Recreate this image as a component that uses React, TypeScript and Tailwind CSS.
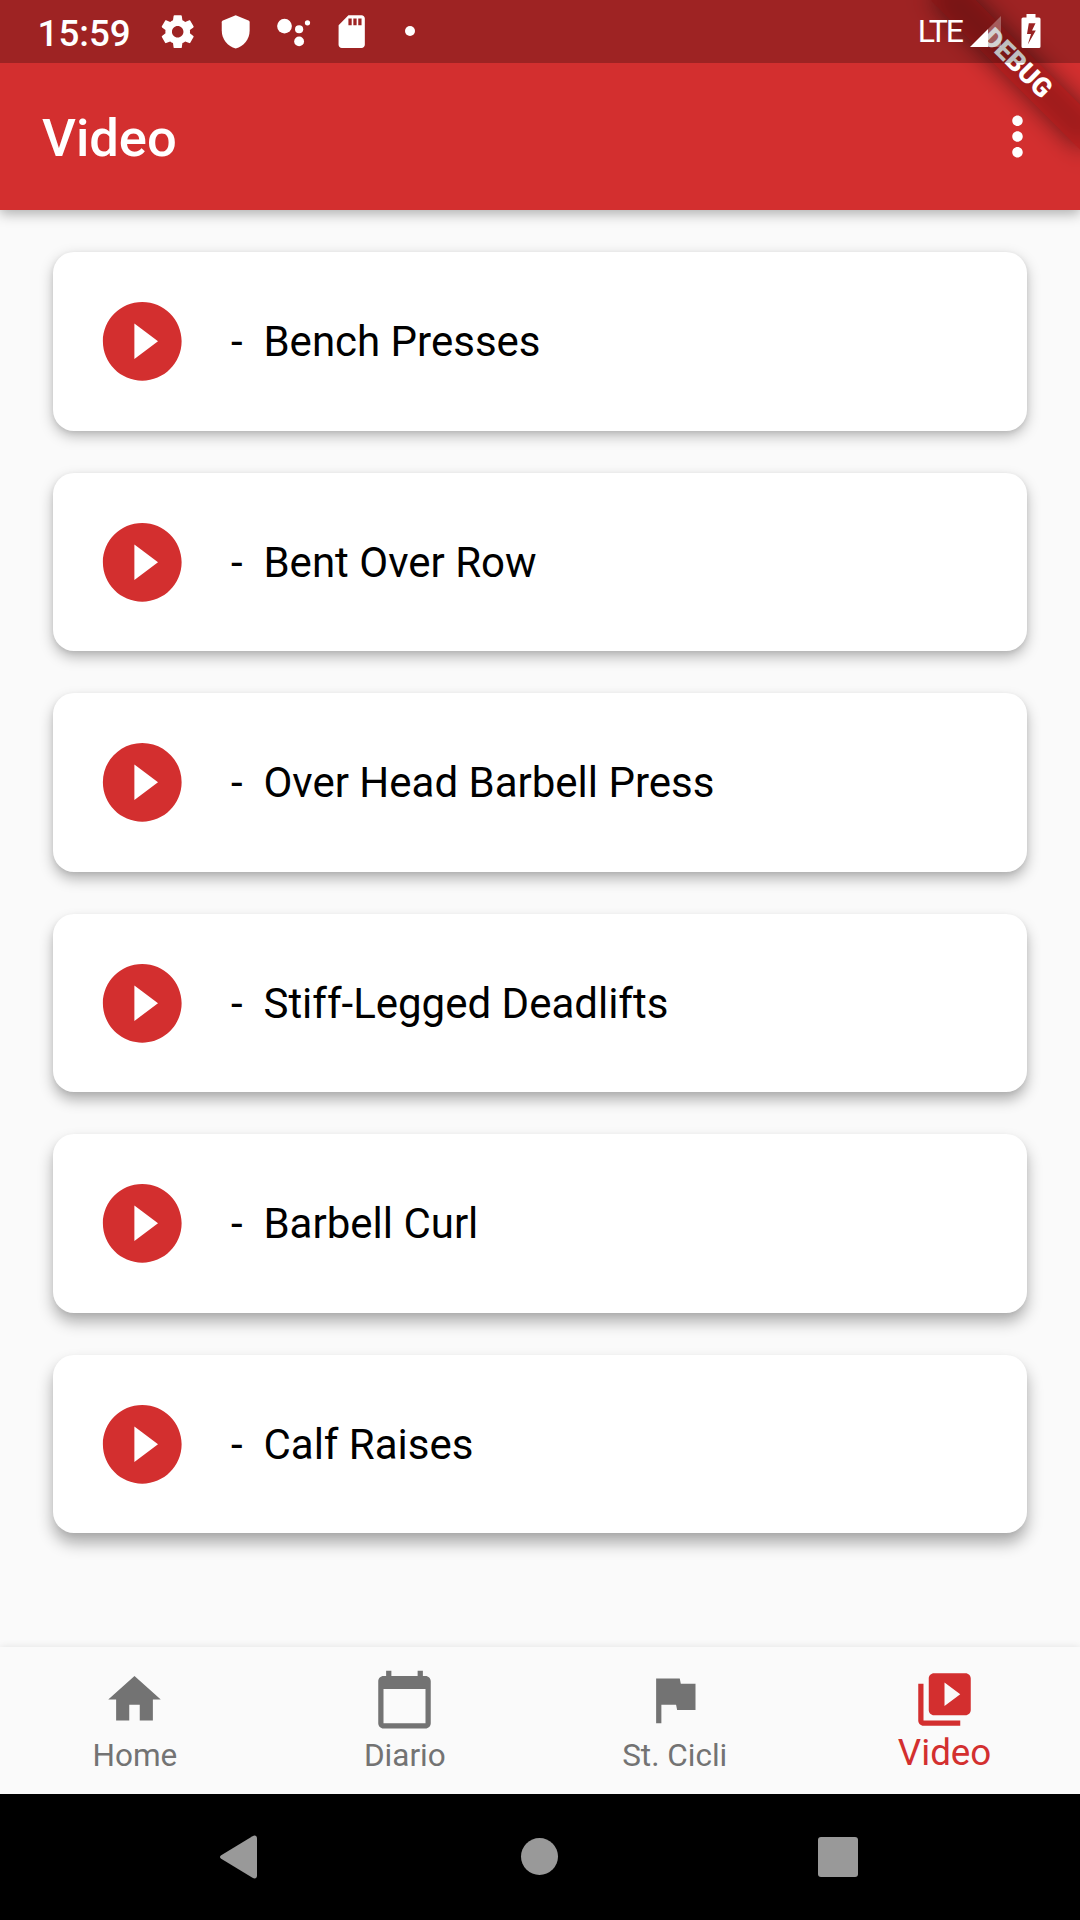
import React from 'react';

interface IconProps {
  d: string;
  className?: string;
}

interface Exercise {
  name: string;
  shadow: string;
}

interface Tab {
  label: string;
  icon: string;
  active?: boolean;
}

const icons = {
  settings:
    'M19.43 12.98c.04-.32.07-.64.07-.98s-.03-.66-.07-.98l2.11-1.65c.19-.15.24-.42.12-.64l-2-3.46c-.12-.22-.39-.3-.61-.22l-2.49 1c-.52-.4-1.08-.73-1.69-.98l-.38-2.65C14.46 2.18 14.25 2 14 2h-4c-.25 0-.46.18-.49.42l-.38 2.65c-.61.25-1.17.59-1.69.98l-2.49-1c-.23-.09-.49 0-.61.22l-2 3.46c-.13.22-.07.49.12.64l2.11 1.65c-.04.32-.07.65-.07.98s.03.66.07.98l-2.11 1.65c-.19.15-.24.42-.12.64l2 3.46c.12.22.39.3.61.22l2.49-1c.52.4 1.08.73 1.69.98l.38 2.65c.03.24.24.42.49.42h4c.25 0 .46-.18.49-.42l.38-2.65c.61-.25 1.17-.59 1.69-.98l2.49 1c.23.09.49 0 .61-.22l2-3.46c.12-.22.07-.49-.12-.64l-2.11-1.65zM12 15.5c-1.93 0-3.5-1.57-3.5-3.5s1.57-3.5 3.5-3.5 3.5 1.57 3.5 3.5-1.57 3.5-3.5 3.5z',
  shield: 'M12 2L4.2 5.2c-.4.2-.7.5-.7 1v5.1c0 5.4 3.6 9.7 8.5 10.9 4.9-1.2 8.5-5.5 8.5-10.9V6.2c0-.5-.3-.8-.7-1z',
  sdCard:
    'M18 2h-8L4.02 8 4 20c0 1.1.9 2 2 2h12c1.1 0 2-.9 2-2V4c0-1.1-.9-2-2-2zm-6 6h-2V4h2v4zm3 0h-2V4h2v4zm3 0h-2V4h2v4z',
  more: 'M12 8c1.1 0 2-.9 2-2s-.9-2-2-2-2 .9-2 2 .9 2 2 2zm0 2c-1.1 0-2 .9-2 2s.9 2 2 2 2-.9 2-2-.9-2-2-2zm0 6c-1.1 0-2 .9-2 2s.9 2 2 2 2-.9 2-2-.9-2-2-2z',
  play: 'M12 2C6.48 2 2 6.48 2 12s4.48 10 10 10 10-4.48 10-10S17.52 2 12 2zm-2 14.5v-9l6 4.5-6 4.5z',
  home: 'M10 20v-6h4v6h5v-8h3L12 3 2 12h3v8z',
  calendar:
    'M20 3h-1V1h-2v2H7V1H5v2H4c-1.1 0-2 .9-2 2v16c0 1.1.9 2 2 2h16c1.1 0 2-.9 2-2V5c0-1.1-.9-2-2-2zm0 18H4V8h16v13z',
  flag: 'M14.4 6L14 4H5v17h2v-7h5.6l.4 2h7V6z',
  library:
    'M4 6H2v14c0 1.1.9 2 2 2h14v-2H4V6zm16-4H8c-1.1 0-2 .9-2 2v12c0 1.1.9 2 2 2h12c1.1 0 2-.9 2-2V4c0-1.1-.9-2-2-2zm-8 12.5v-9l6 4.5-6 4.5z',
};

// Shadows drop further the lower the card sits on the screen
const exercises: Exercise[] = [
  { name: 'Bench Presses', shadow: 'shadow-[0_5px_14px_rgba(0,0,0,0.26),0_2px_5px_rgba(0,0,0,0.08)]' },
  { name: 'Bent Over Row', shadow: 'shadow-[0_6px_14px_rgba(0,0,0,0.27),0_2px_5px_rgba(0,0,0,0.08)]' },
  { name: 'Over Head Barbell Press', shadow: 'shadow-[0_7px_14px_rgba(0,0,0,0.28),0_2px_5px_rgba(0,0,0,0.07)]' },
  { name: 'Stiff-Legged Deadlifts', shadow: 'shadow-[0_8px_14px_rgba(0,0,0,0.29),0_2px_5px_rgba(0,0,0,0.06)]' },
  { name: 'Barbell Curl', shadow: 'shadow-[0_9px_15px_rgba(0,0,0,0.3),0_2px_5px_rgba(0,0,0,0.05)]' },
  { name: 'Calf Raises', shadow: 'shadow-[0_10px_16px_rgba(0,0,0,0.32),0_2px_5px_rgba(0,0,0,0.04)]' },
];

const tabs: Tab[] = [
  { label: 'Home', icon: icons.home },
  { label: 'Diario', icon: icons.calendar },
  { label: 'St. Cicli', icon: icons.flag },
  { label: 'Video', icon: icons.library, active: true },
];

const Icon: React.FC<IconProps> = ({ d, className }) => (
  <svg viewBox="0 0 24 24" fill="currentColor" className={className}>
    <path d={d} />
  </svg>
);

const StatusBar: React.FC = () => (
  <div className="relative z-20 flex h-[63px] items-center justify-between bg-black/25 pl-[37.5px] pr-[39px] text-white">
    <div className="flex items-center">
      <span className="w-[120.8px] pt-[5px] text-[36.75px] font-medium leading-none">15:59</span>
      <div className="flex items-center gap-[18.6px]">
        <Icon d={icons.settings} className="size-[39.4px]" />
        <Icon d={icons.shield} className="size-[39.4px]" />
        <svg viewBox="0 0 24 24" fill="currentColor" className="size-[39.4px]">
          <circle cx="6.4" cy="8.6" r="4.5" />
          <circle cx="15.3" cy="10.5" r="2.5" />
          <circle cx="20.4" cy="6.6" r="1.6" />
          <circle cx="15.3" cy="17.9" r="3" />
        </svg>
        <Icon d={icons.sdCard} className="size-[39.4px]" />
        <div className="mx-[14.7px] size-[10px] rounded-full bg-white" />
      </div>
    </div>
    <div className="flex items-center">
      <span className="pb-[2px] text-[32px] leading-none tracking-[-2px]">LTE</span>
      <svg viewBox="0 0 31 31" fill="currentColor" className="ml-[8px] size-[31px]">
        <path d="M31 0v31H18V13z" opacity="0.3" />
        <path d="M18 13v18H0z" />
      </svg>
      <svg viewBox="0 0 20 34" fill="currentColor" className="mb-[1px] ml-[20px] h-[34px] w-[20px]">
        <path
          fillRule="evenodd"
          d="M5.5 0h9v3.4H18a1.5 1.5 0 0 1 1.5 1.5V32.5A1.5 1.5 0 0 1 18 34H2A1.5 1.5 0 0 1 .5 32.5V4.9A1.5 1.5 0 0 1 2 3.4h3.5zM7.8 9.2L6 20h4L6.8 30.5l8-14H11L14.5 9.2z"
        />
      </svg>
    </div>
  </div>
);

const DebugBanner: React.FC = () => (
  <div className="absolute left-[975px] top-[73.5px] z-10 h-[31.5px] w-[210px] origin-[105px_-73.5px] rotate-45">
    <div className="absolute inset-0 bg-black/50 blur-[12px]" />
    <div className="relative flex h-full items-center justify-center bg-[#b71c1c]/63 text-[26.8px] font-black leading-none text-white">
      DEBUG
    </div>
  </div>
);

const ExerciseCard: React.FC<Exercise> = ({ name, shadow }) => (
  <div className={`flex h-[178.5px] items-center rounded-[21px] bg-white pl-[42px] ${shadow}`}>
    <Icon d={icons.play} className="size-[94.5px] text-[#d32f2f]" />
    <span className="ml-[42px] whitespace-pre pt-[2px] text-[42px] leading-none">{`-  ${name}`}</span>
  </div>
);

const BottomTab: React.FC<Tab> = ({ label, icon, active }) => (
  <div className={`flex flex-1 flex-col items-center pt-[21px] ${active ? 'text-[#d32f2f]' : 'text-[#737373]'}`}>
    <Icon d={icon} className="size-[63px]" />
    <span className={active ? 'mt-[4px] text-[36.75px] leading-none' : 'mt-[9px] text-[31.5px] leading-none'}>
      {label}
    </span>
  </div>
);

const App: React.FC = () => {
  return (
    <div className="relative flex h-[1920px] w-[1080px] flex-col overflow-hidden bg-[#fafafa] font-[Roboto,sans-serif] text-black">
      <header className="relative h-[210px] overflow-visible bg-[#d32f2f] shadow-[0_4px_12px_rgba(0,0,0,0.3)]">
        <DebugBanner />
        <StatusBar />
        <div className="flex h-[147px] items-center justify-between pl-[42px] pr-[31.5px] text-white">
          <h1 className="pt-[4px] text-[52.5px] font-medium leading-none">Video</h1>
          <Icon d={icons.more} className="size-[63px]" />
        </div>
      </header>

      <main className="flex flex-1 flex-col gap-[42px] pl-[52.5px] pr-[53px] pt-[42px]">
        {exercises.map((exercise) => (
          <ExerciseCard key={exercise.name} {...exercise} />
        ))}
      </main>

      <nav className="flex h-[147px] bg-[#fafafa] pr-[0.5px] shadow-[0_0_8px_rgba(0,0,0,0.1)]">
        {tabs.map((tab) => (
          <BottomTab key={tab.label} {...tab} />
        ))}
      </nav>

      <footer className="grid h-[126px] grid-cols-[219px_38px_264px_37px_260px_40px] items-center bg-black text-[#999999]">
        <svg viewBox="0 0 38 44" fill="currentColor" className="col-start-2 h-[44px] w-[38px]">
          <path d="M2.2 20.2L33.5 1.2C36-.2 38 .8 38 3.5V40.5C38 43.2 36 44.2 33.5 42.8L2.2 23.8C.6 22.8.6 21.2 2.2 20.2z" />
        </svg>
        <div className="col-start-4 mb-px size-[37px] rounded-full bg-[#999999]" />
        <div className="col-start-6 size-[40px] rounded-[3px] bg-[#999999]" />
      </footer>
    </div>
  );
};

export default App;
